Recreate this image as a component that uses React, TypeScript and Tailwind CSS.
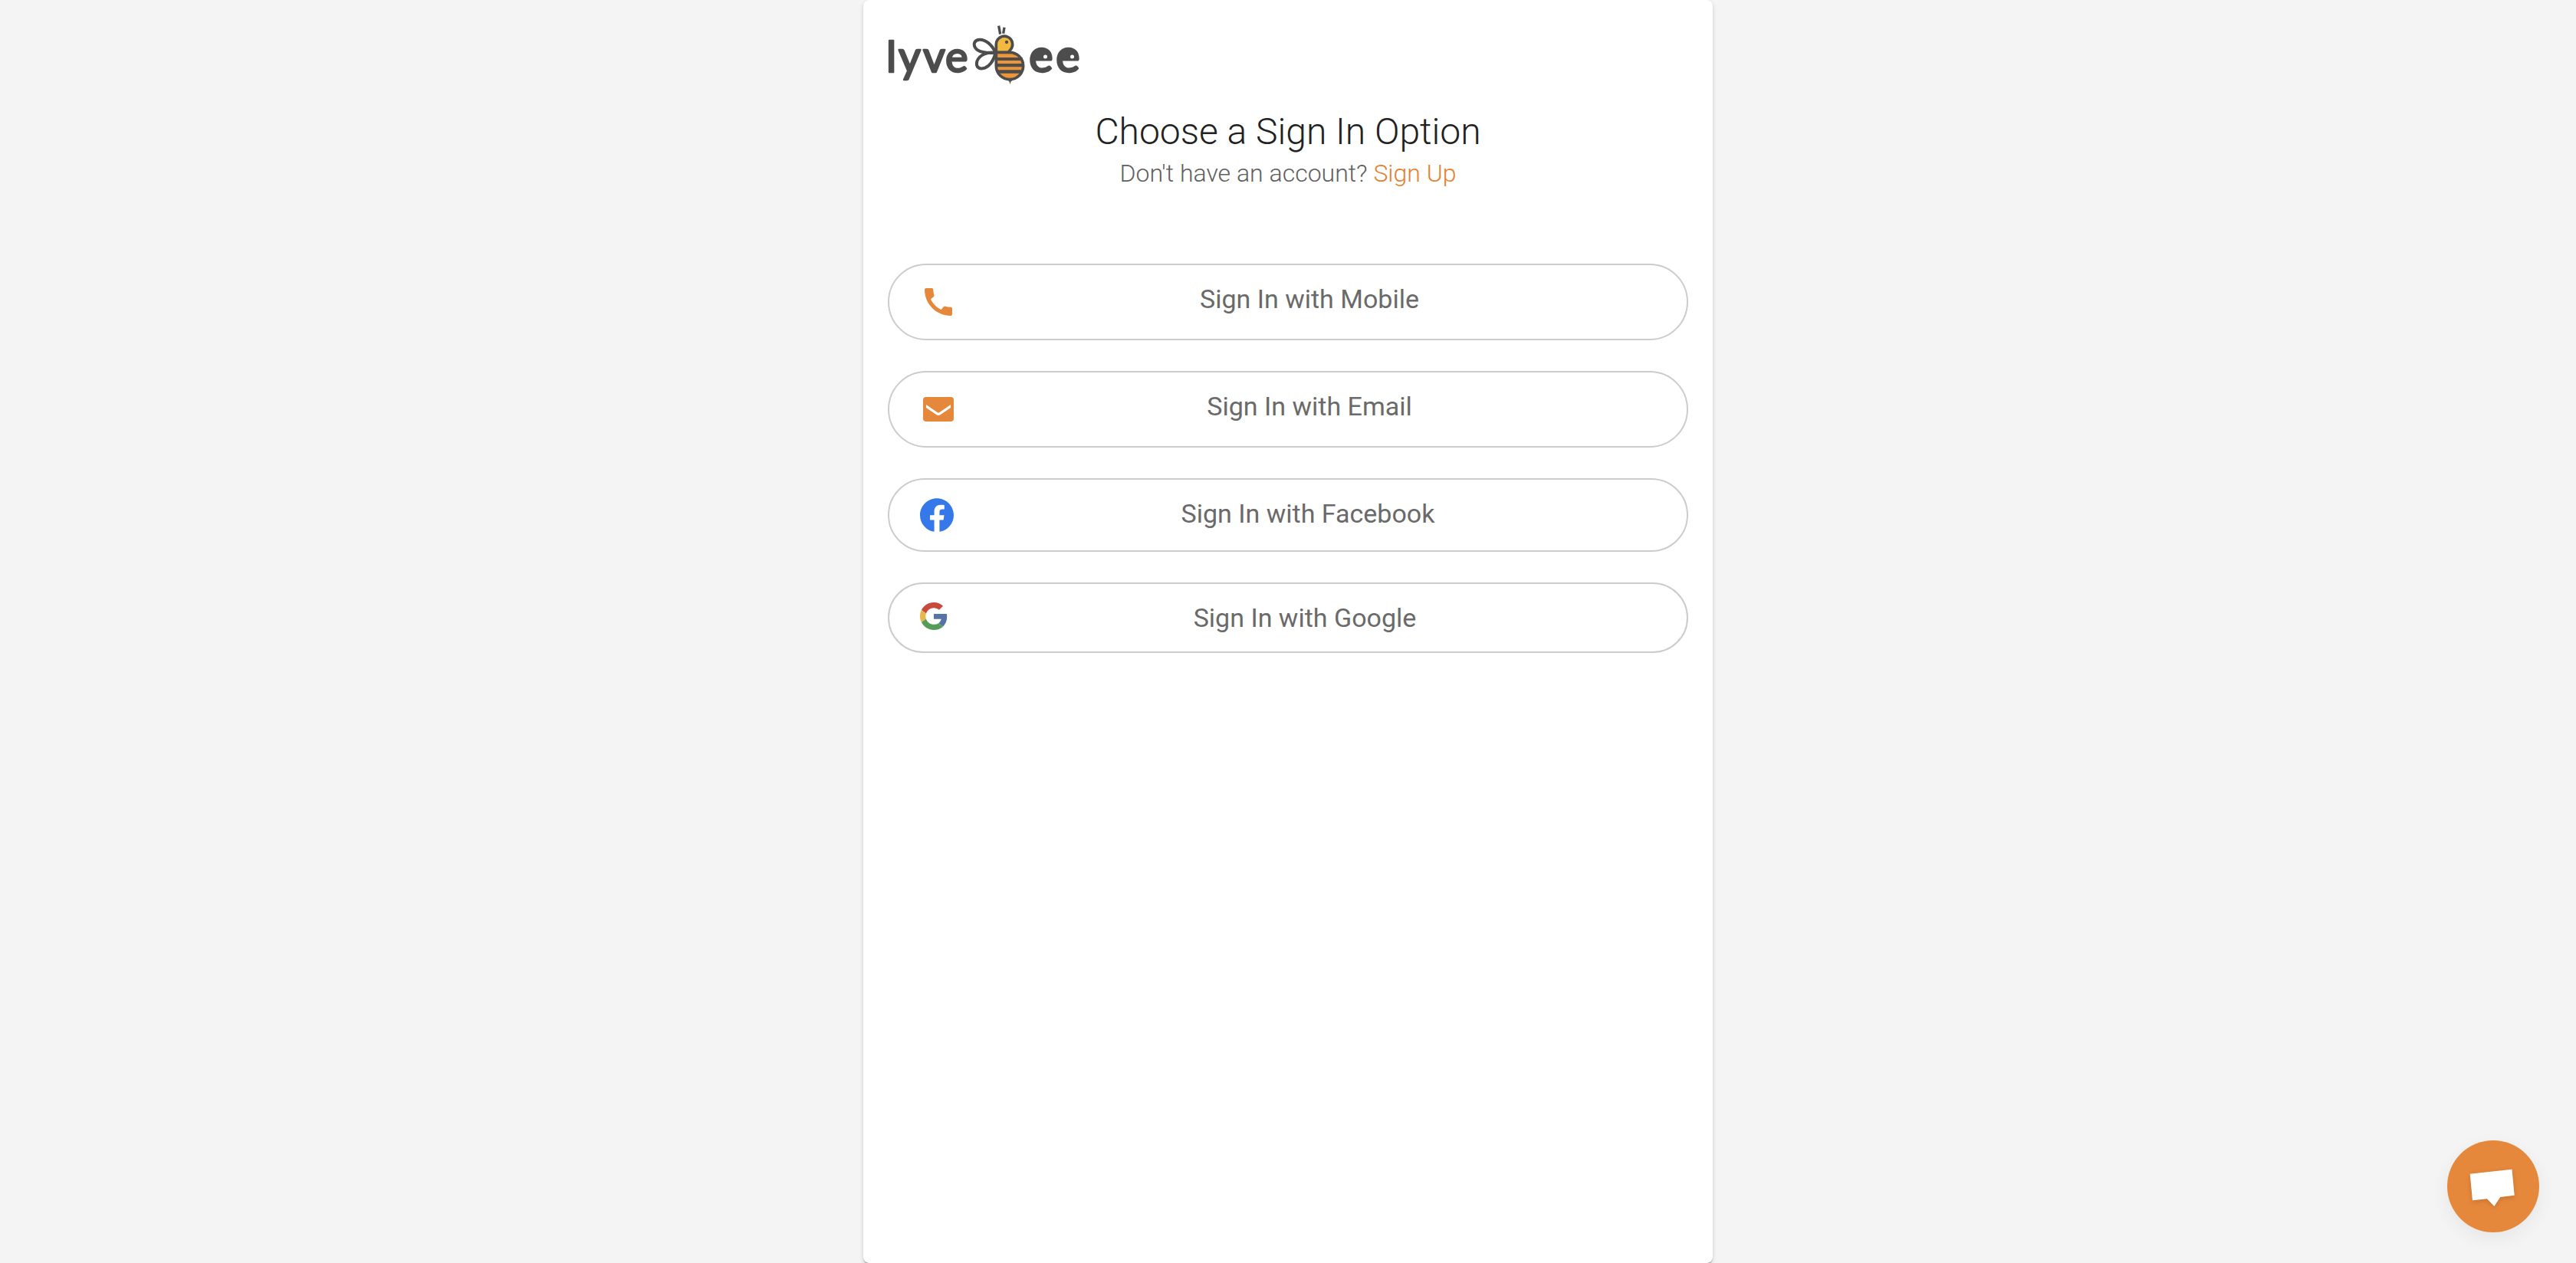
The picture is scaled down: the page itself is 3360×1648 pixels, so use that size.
import type { ReactNode } from "react";
import { MdCall } from "react-icons/md";

function Logo() {
  return (
    <svg
      viewBox="-4 0 260 80"
      className="-ml-1 h-20 w-[260px]"
      role="img"
      aria-label="lyvebee"
      fill="#4d4d4d"
    >
      <g
        fontFamily="Lato, sans-serif"
        fontWeight="400"
        stroke="#4d4d4d"
        strokeWidth="2.500"
        strokeLinejoin="round"
      >
        <text x="-2 14 46 75" y="62" fontSize="56">
          lyve
        </text>
        <text x="184 219" y="62" fontSize="60">
          ee
        </text>
      </g>
      {/* filled bowls with eyes */}
      <ellipse cx="200.500" cy="41" rx="9" ry="6" />
      <ellipse cx="235.500" cy="41" rx="9" ry="6" />
      <circle cx="205.500" cy="42" r="2.500" fill="#fff" />
      <circle cx="240.500" cy="42" r="2.500" fill="#fff" />
      {/* bee */}
      <g transform="translate(97 -12) scale(0.3333)">
        <g fill="none" stroke="#4d4d4d" strokeWidth="12" strokeLinejoin="round">
          <path d="M130 146C118 115 90 94 68 95C48 96 42 113 52 128C62 143 95 150 130 146Z" />
          <path d="M130 147C100 142 66 155 58 180C53 200 63 210 80 208C105 203 124 178 130 147Z" />
        </g>
        <path d="M143 41L149 74" stroke="#4d4d4d" strokeWidth="10" />
        <path d="M165 47L161 71" stroke="#4d4d4d" strokeWidth="10" />
        <path
          d="M133 146V112A32 32 0 1 1 188 136L180 146Z"
          fill="#f3b93f"
          stroke="#4d4d4d"
          strokeWidth="11"
        />
        <circle cx="174" cy="105" r="6.500" />
        <path
          d="M133 145H186A53 53 0 1 1 133 198Z"
          fill="#ee9538"
          stroke="#4d4d4d"
          strokeWidth="11"
        />
        <path d="M133 165H236V177H133ZM133 189H240V202H133ZM136 214H236V227H140Z" />
        <path d="M178 253H198L190 260L188 271L185 260Z" />
      </g>
    </svg>
  );
}

function MailIcon() {
  return (
    <svg viewBox="0 0 48 48" className="size-12" aria-hidden="true">
      <rect x="4" y="8" width="40" height="32" rx="4" fill="#e6883c" />
      <path
        d="M8 18V22L21.500 31.200Q24 32.800 26.500 31.200L40 22V18L25.500 28Q24 29 22.500 28Z"
        fill="#fff"
      />
    </svg>
  );
}

function FacebookIcon() {
  return (
    <svg viewBox="0 0 24 24" className="size-11" aria-hidden="true">
      <path
        fill="#3578ea"
        d="M24 12.073c0-6.627-5.373-12-12-12s-12 5.373-12 12c0 5.990 4.388 10.954 10.125 11.854v-8.385H7.078v-3.470h3.047V9.430c0-3.007 1.792-4.669 4.533-4.669 1.312 0 2.686.235 2.686.235v2.953H15.830c-1.491 0-1.956.925-1.956 1.874v2.250h3.328l-.532 3.470h-2.796v8.385C19.612 23.027 24 18.062 24 12.073z"
      />
    </svg>
  );
}

function GoogleIcon() {
  return (
    <svg viewBox="0 0 48 48" className="size-9" aria-hidden="true">
      <path fill="#c74a3d" d="M24 9.500c3.540 0 6.710 1.220 9.210 3.600l6.850-6.850C35.900 2.380 30.470 0 24 0 14.620 0 6.510 5.380 2.560 13.220l7.980 6.190C12.430 13.720 17.740 9.500 24 9.500z" />
      <path fill="#5673a8" d="M46.980 24.550c0-1.570-.150-3.090-.380-4.550H24v9.020h12.940c-.580 2.960-2.260 5.480-4.780 7.180l7.730 6c4.510-4.180 7.090-10.360 7.090-17.650z" />
      <path fill="#e8b64c" d="M10.530 28.590c-.480-1.450-.760-2.990-.760-4.590s.270-3.140.760-4.590l-7.980-6.190C.920 16.460 0 20.120 0 24c0 3.880.920 7.540 2.560 10.780l7.970-6.190z" />
      <path fill="#549c58" d="M24 48c6.480 0 11.930-2.130 15.890-5.810l-7.730-6c-2.150 1.450-4.920 2.300-8.160 2.300-6.260 0-11.570-4.220-13.470-9.910l-7.980 6.190C6.510 42.620 14.620 48 24 48z" />
    </svg>
  );
}

function Option({ icon, children }: { icon: ReactNode; children: ReactNode }) {
  return (
    <button
      type="button"
      className="flex w-full cursor-pointer items-start rounded-full border-2 border-[#cccccc] bg-white py-6 pr-8 pl-10 text-[34px] leading-10 text-[#6a6a6a]"
    >
      {icon}
      <span className="flex-1 text-center">{children}</span>
    </button>
  );
}

export default function App() {
  return (
    <div className="min-h-screen bg-[#f4f4f4] font-['Roboto',sans-serif]">
      <main className="mx-auto min-h-screen w-[33%] rounded-lg bg-white p-8 shadow-[0_4px_2px_-2px_rgba(0,0,0,0.2),0_2px_2px_rgba(0,0,0,0.14),0_2px_6px_rgba(0,0,0,0.12)]">
        <Logo />
        <h1 className="mt-7 text-center text-5xl leading-[64px] font-light text-[#222222]">
          Choose a Sign In Option
        </h1>
        <p className="mt-0.5 text-center text-[32px] leading-10 font-light text-[#606060]">
          Don't have an account?{" "}
          <a href="#sign-up" className="text-[#e6802e]">
            Sign Up
          </a>
        </p>
        <div className="mt-[98px] flex flex-col gap-10">
          <Option icon={<MdCall className="size-12 text-[#e6883c]" />}>Sign In with Mobile</Option>
          <Option icon={<MailIcon />}>Sign In with Email</Option>
          <Option icon={<FacebookIcon />}>Sign In with Facebook</Option>
          <Option icon={<GoogleIcon />}>Sign In with Google</Option>
        </div>
      </main>
      <button
        type="button"
        aria-label="Open chat"
        className="fixed right-12 bottom-10 size-30 cursor-pointer rounded-full bg-[#e6883c] shadow-[0_8px_24px_rgba(0,0,0,0.06)]"
      >
        <svg
          viewBox="0 0 120 120"
          className="size-full drop-shadow-[0_2px_3px_rgba(0,0,0,0.15)]"
          fill="#fff"
          aria-hidden="true"
        >
          <path d="M29.700 43.700L84.500 37.700L87.700 71.800L69.300 74L61.300 86L52 76.300L33 78.300Z" />
        </svg>
      </button>
    </div>
  );
}
